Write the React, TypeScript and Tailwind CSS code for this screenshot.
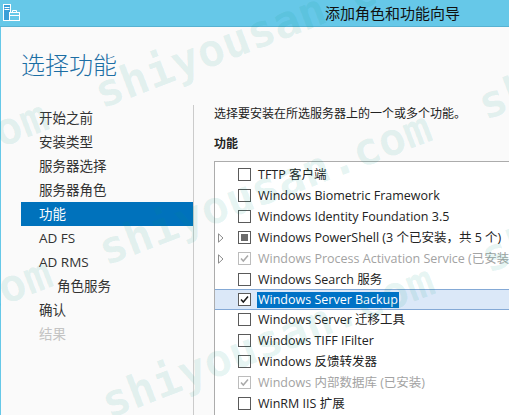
import { ReactNode } from 'react'

const navItems = [
  { label: '开始之前' },
  { label: '安装类型' },
  { label: '服务器选择' },
  { label: '服务器角色' },
  { label: '功能', active: true },
  { label: 'AD FS' },
  { label: 'AD RMS' },
  { label: '角色服务', sub: true },
  { label: '确认' },
  { label: '结果', disabled: true },
]

type State = 'off' | 'on' | 'partial' | 'installed'

const features: { label: string; state: State; expand?: boolean; selected?: boolean }[] = [
  { label: 'TFTP 客户端', state: 'off' },
  { label: 'Windows Biometric Framework', state: 'off' },
  { label: 'Windows Identity Foundation 3.5', state: 'off' },
  { label: 'Windows PowerShell (3 个已安装，共 5 个)', state: 'partial', expand: true },
  { label: 'Windows Process Activation Service (已安装)', state: 'installed', expand: true },
  { label: 'Windows Search 服务', state: 'off' },
  { label: 'Windows Server Backup', state: 'on', selected: true },
  { label: 'Windows Server 迁移工具', state: 'off' },
  { label: 'Windows TIFF IFilter', state: 'off' },
  { label: 'Windows 反馈转发器', state: 'off' },
  { label: 'Windows 内部数据库 (已安装)', state: 'installed' },
  { label: 'WinRM IIS 扩展', state: 'off' },
]

function CheckBox({ state }: { state: State }) {
  const faded = state === 'installed'
  return (
    <span
      className={`w-[13px] h-[13px] shrink-0 border flex items-center justify-center bg-white ${
        faded ? 'border-[#bcbcbc]' : 'border-[#5a5a5a]'
      }`}
    >
      {state === 'partial' && <span className="w-[7px] h-[7px] bg-[#6b6b6b]" />}
      {(state === 'on' || state === 'installed') && (
        <svg width="11" height="11" viewBox="0 0 11 11">
          <path
            d="M2 5.5 L4.3 8 L9 2.5"
            fill="none"
            stroke={faded ? '#a9a9a9' : '#1a1a1a'}
            strokeWidth="1.5"
          />
        </svg>
      )}
    </span>
  )
}

function Expander() {
  return (
    <svg width="6" height="10" viewBox="0 0 6 10" className="shrink-0">
      <path d="M0.5 0.8 L5 5 L0.5 9.2 Z" fill="none" stroke="#8c8c8c" strokeWidth="1" />
    </svg>
  )
}

// diagonal site watermark baked into the screenshot
function Watermark({ x, y }: { x: number; y: number }) {
  return (
    <div
      className="absolute origin-top-left -rotate-[21deg] whitespace-pre text-[45px] leading-none font-bold text-[#00967f]/10 [font-family:'DejaVu_Sans_Mono',monospace]"
      style={{ left: x, top: y }}
    >
      {'shiyousan.com  shiyousan.com  shiyousan.com'}
    </div>
  )
}

function Row({ children, selected }: { children: ReactNode; selected?: boolean }) {
  return (
    <div
      className={`h-[21px] flex items-center ${
        selected ? 'bg-[#dbe8f8] border-y border-[#84a9d6] -my-px' : ''
      }`}
    >
      {children}
    </div>
  )
}

export default function App() {
  return (
    <div className="w-[509px] h-[415px] overflow-hidden relative flex flex-col bg-[#fafafa] [font-family:'Open_Sans','Noto_Sans_CJK_SC',sans-serif] text-[#333]">
      {/* title bar */}
      <div className="h-[27px] shrink-0 bg-[#66c8e8] border-b border-[#57b2d2] flex items-center">
        <svg width="17" height="17" viewBox="0 0 17 17" className="ml-[3px] mb-[2px]">
          <rect x="0.5" y="0.5" width="7" height="16" fill="#3a9fd8" stroke="#fff" />
          <path d="M1.5 3.5 H6.5 M1.5 5.5 H6.5" stroke="#fff" />
          <rect x="6.5" y="8.5" width="10" height="8" fill="#66c8e8" stroke="#fff" />
          <path d="M9.5 8.5 V6.5 H13.5 V8.5 M6.5 11.5 H16.5" fill="none" stroke="#fff" />
        </svg>
        <span className="ml-[305px] text-[15px] text-[#111] [font-family:'Noto_Sans_CJK_SC',sans-serif]">
          添加角色和功能向导
        </span>
      </div>

      <div className="flex-1 flex flex-col border-l border-[#66c8e8]">
        <h1 className="pt-[25px] pl-[20px] h-[78px] text-[24px] leading-[24px] font-light text-[#1c6ea4] [font-family:'Noto_Sans_CJK_SC',sans-serif]">
          选择功能
        </h1>

        <div className="flex-1 flex">
          {/* nav */}
          <div className="w-[193px] shrink-0 border-r border-[#cbcbcb] pl-[20px] pt-px text-[13.5px]">
            {navItems.map((n) => (
              <div
                key={n.label}
                className={`h-[24px] flex items-center ${n.sub ? 'pl-[36px]' : 'pl-[18px]'} ${
                  n.active ? 'bg-[#0072bc] text-white' : n.disabled ? 'text-[#c4c4c4]' : ''
                }`}
              >
                {n.label}
              </div>
            ))}
          </div>

          {/* main */}
          <div className="flex-1 pl-[20px] pt-[1px] text-[12px]">
            <p className="h-[16px] leading-[16px] text-[#222] text-[12px]">选择要安装在所选服务器上的一个或多个功能。</p>
            <p className="mt-[14px] h-[16px] leading-[16px] font-bold text-[#222]">功能</p>
            <div className="mt-[9px] border-t border-l border-[#acacac] bg-white pt-[2px] h-[300px] text-[12.5px]">
              {features.map((f) => (
                <Row key={f.label} selected={f.selected}>
                  <span className="w-[23px] pl-[3px] flex items-center">{f.expand && <Expander />}</span>
                  <CheckBox state={f.state} />
                  <span
                    className={`ml-[6px] whitespace-nowrap px-px leading-[16px] ${
                      f.selected ? 'bg-[#0072c6] text-white' : f.state === 'installed' ? 'text-[#a3a3a3]' : 'text-[#222]'
                    }`}
                  >
                    {f.label}
                  </span>
                </Row>
              ))}
            </div>
          </div>
        </div>
      </div>

      {/* watermark */}
      <div className="absolute inset-0 pointer-events-none">
        <Watermark x={-291} y={219} />
        <Watermark x={-287} y={376} />
        <Watermark x={-284} y={529} />
      </div>
    </div>
  )
}
